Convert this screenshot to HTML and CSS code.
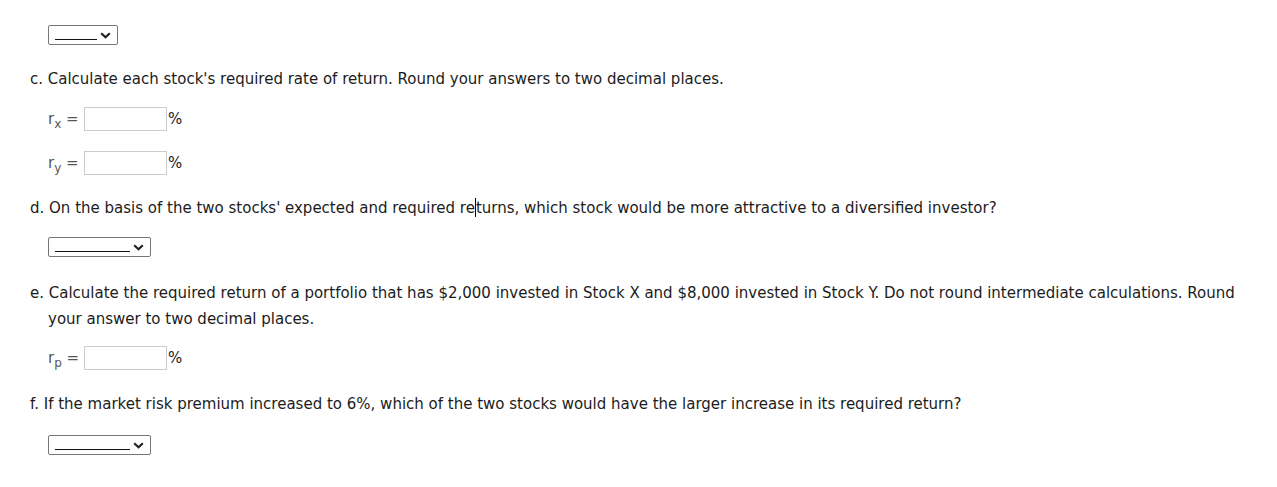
FILE: index.html
```html
<!DOCTYPE html>
<html>
<head>
<meta charset="utf-8">
<link rel="stylesheet" href="styles.css">
</head>
<body>
<div class="page">
  <div class="sel-row first">
    <div class="select short"><span class="blank"></span><svg class="chev" width="11" height="7" viewBox="0 0 11 7"><path d="M1.2 1.2 L5.5 5.3 L9.8 1.2" fill="none" stroke="#222" stroke-width="2.2"/></svg></div>
  </div>

  <p class="q gap-c">c. Calculate each stock's required rate of return. Round your answers to two decimal places.</p>

  <div class="ans-row gap-rx">
    <span class="lbl">r<sub>x</sub> =</span><span class="input"></span><span class="pct">%</span>
  </div>
  <div class="ans-row gap-ry">
    <span class="lbl">r<sub>y</sub> =</span><span class="input"></span><span class="pct">%</span>
  </div>

  <p class="q gap-d">d. On the basis of the two stocks' expected and required re<span class="caret"></span>turns, which stock would be more attractive to a diversified investor?</p>

  <div class="sel-row gap-s2">
    <div class="select long"><span class="blank"></span><svg class="chev" width="11" height="7" viewBox="0 0 11 7"><path d="M1.2 1.2 L5.5 5.3 L9.8 1.2" fill="none" stroke="#222" stroke-width="2.2"/></svg></div>
  </div>

  <p class="q hang gap-e">e. Calculate the required return of a portfolio that has $2,000 invested in Stock X and $8,000 invested in Stock Y. Do not round intermediate calculations. Round your answer to two decimal places.</p>

  <div class="ans-row gap-rp">
    <span class="lbl">r<sub>p</sub> =</span><span class="input"></span><span class="pct">%</span>
  </div>

  <p class="q gap-f">f. If the market risk premium increased to 6%, which of the two stocks would have the larger increase in its required return?</p>

  <div class="sel-row gap-s3">
    <div class="select long"><span class="blank"></span><svg class="chev" width="11" height="7" viewBox="0 0 11 7"><path d="M1.2 1.2 L5.5 5.3 L9.8 1.2" fill="none" stroke="#222" stroke-width="2.2"/></svg></div>
  </div>
</div>
</body>
</html>
```

FILE: styles.css
```css
html, body {
  margin: 0;
  padding: 0;
  background: #fff;
}
.page {
  padding: 0 20px 0 30px;
  font-family: "DejaVu Sans", Verdana, sans-serif;
  font-size: 15px;
  color: #1c1c1c;
}
.q {
  margin: 0;
  padding-top: 1px;
  line-height: 26px;
}
.hang {
  padding-left: 18px;
  text-indent: -18px;
}
.caret {
  display: inline-block;
  width: 1px;
  height: 19px;
  background: #000;
  vertical-align: -4px;
}
.sel-row {
  padding-left: 18px;
  height: 20px;
}
.select {
  box-sizing: border-box;
  height: 20px;
  border: 1px solid #767676;
  border-radius: 2px;
  display: flex;
  align-items: center;
  padding-left: 6px;
  padding-right: 6px;
}
.select.short { width: 70px; }
.select.long { width: 103px; }
.blank {
  display: block;
  height: 1px;
  background: #111;
  margin-top: 8px;
}
.select.short .blank { width: 42px; }
.select.long .blank { width: 75px; }
.chev {
  margin-left: auto;
  margin-top: 1px;
}
.ans-row {
  padding-left: 18px;
  display: flex;
  align-items: center;
  height: 24px;
}
.lbl {
  color: #555;
  width: 36px;
  white-space: nowrap;
}
.lbl sub {
  font-size: 12px;
  vertical-align: -4px;
  line-height: 0;
}
.input {
  box-sizing: border-box;
  width: 83px;
  height: 24px;
  border: 1px solid #cccccc;
  background: #fff;
}
.pct {
  margin-left: 1px;
}
.first { margin-top: 25px; }
.gap-c { margin-top: 20px; }
.gap-rx { margin-top: 15px; }
.gap-ry { margin-top: 20px; }
.gap-d { margin-top: 19px; }
.gap-s2 { margin-top: 16px; }
.gap-e { margin-top: 22px; }
.gap-rp { margin-top: 14px; }
.gap-f { margin-top: 20px; }
.gap-s3 { margin-top: 18px; }
```
